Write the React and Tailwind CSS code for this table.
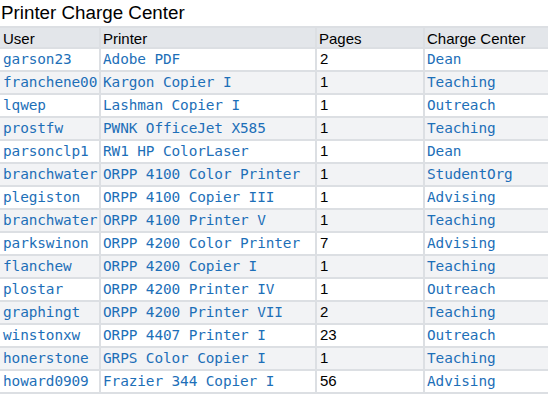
import React from "react";

const rows = [
  ["garson23", "Adobe PDF", "2", "Dean"],
  ["franchene00", "Kargon Copier I", "1", "Teaching"],
  ["lqwep", "Lashman Copier I", "1", "Outreach"],
  ["prostfw", "PWNK OfficeJet X585", "1", "Teaching"],
  ["parsonclp1", "RW1 HP ColorLaser", "1", "Dean"],
  ["branchwater", "ORPP 4100 Color Printer", "1", "StudentOrg"],
  ["plegiston", "ORPP 4100 Copier III", "1", "Advising"],
  ["branchwater", "ORPP 4100 Printer V", "1", "Teaching"],
  ["parkswinon", "ORPP 4200 Color Printer", "7", "Advising"],
  ["flanchew", "ORPP 4200 Copier I", "1", "Teaching"],
  ["plostar", "ORPP 4200 Printer IV", "1", "Outreach"],
  ["graphingt", "ORPP 4200 Printer VII", "2", "Teaching"],
  ["winstonxw", "ORPP 4407 Printer I", "23", "Outreach"],
  ["honerstone", "GRPS Color Copier I", "1", "Teaching"],
  ["howard0909", "Frazier 344 Copier I", "56", "Advising"],
];

const mono = "font-['DejaVu_Sans_Mono',monospace] text-[14.4px] text-[#1d6fb8] tracking-[-0.1px]";
const rowCls = "grid grid-cols-[99px_216px_108px_1fr] h-[23px] border-b-2 border-[#dcdfe3] leading-[21px]";
const c = "whitespace-nowrap overflow-hidden";
const cl = "border-l-2 border-[#dcdfe3] pl-[2px] whitespace-nowrap overflow-hidden";

export default function App() {
  return (
    <div className="w-[548px] h-[394px] overflow-hidden bg-white font-['Liberation_Sans',Arial,sans-serif] text-black">
      <h1 className="text-[18.8px] leading-[26px] h-[26px] pl-[1px] font-normal">Printer Charge Center</h1>
      <div className={`${rowCls} bg-[#e3e6ea] border-t-2 h-[23px] text-[15px] leading-[19px]`}>
        <div className={`${c} pl-[3px]`}>User</div>
        <div className={cl}>Printer</div>
        <div className={cl}>Pages</div>
        <div className={cl}>Charge Center</div>
      </div>
      {rows.map((r, i) => (
        <div key={i} className={`${rowCls} ${i % 2 === 1 ? "bg-[#f2f3f5]" : "bg-white"}`}>
          <div className={`${c} ${mono} pl-[3px]`}>{r[0]}</div>
          <div className={`${cl} ${mono}`}>{r[1]}</div>
          <div className={`${cl} text-[15px] leading-[19px] pl-[3px]`}>{r[2]}</div>
          <div className={`${cl} ${mono}`}>{r[3]}</div>
        </div>
      ))}
    </div>
  );
}
